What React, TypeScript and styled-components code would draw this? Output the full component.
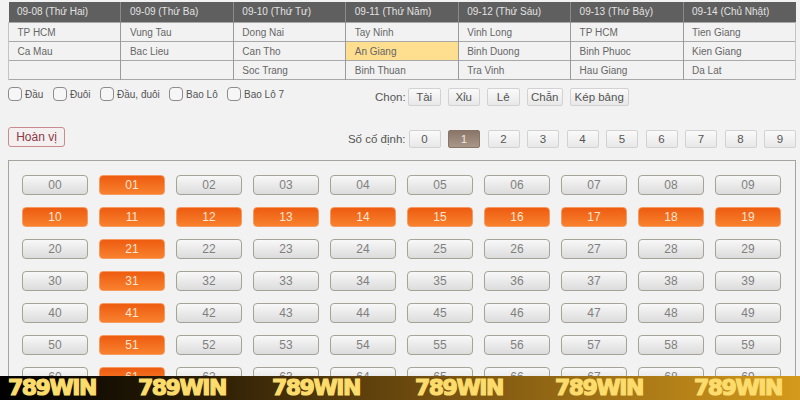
import React from "react";
import styled, { createGlobalStyle } from "styled-components";

const GlobalStyle = createGlobalStyle`
  html, body {
    margin: 0;
    padding: 0;
    background: #f2f2f2;
    font-family: "Liberation Sans", Arial, sans-serif;
  }
`;

const Page = styled.div`
  position: relative;
  width: 800px;
  height: 400px;
  overflow: hidden;
  box-sizing: border-box;
  padding: 2px 4px 0 8px;
  background: #f2f2f2;
`;

const Schedule = styled.table`
  width: 788px;
  border-collapse: collapse;
  table-layout: fixed;
  font-size: 10px;
  color: #666;
  border-bottom: 1px solid #a8a8a8;
`;

const HeadCell = styled.th`
  height: 19px;
  padding: 0 0 1px 8.5px;
  background: #5f5f5f;
  color: #e2e2e2;
  font-weight: normal;
  text-align: left;
  border-left: 1px solid #8a8a8a;
  &:first-child {
    border-left: none;
  }
`;

const Cell = styled.td<{ $today?: boolean }>`
  height: 18px;
  padding: 0 0 0 8.5px;
  background: ${(p) => (p.$today ? "#fddf8f" : "#f2f2f2")};
  border-top: 1px solid #a8a8a8;
  border-left: 1px solid #9a9a9a;
  &:first-child {
    border-left: 1px solid #c4c4c4;
  }
  &:last-child {
    border-right: 1px solid #c4c4c4;
  }
`;

const OptionBar = styled.div`
  display: flex;
  align-items: center;
  height: 18px;
  margin-top: 5px;
`;

const Check = styled.label<{ $gap: number }>`
  display: flex;
  align-items: center;
  gap: 3px;
  width: ${(p) => p.$gap}px;
  font-size: 10px;
  color: #555;
`;

const Box = styled.span`
  width: 12px;
  height: 12px;
  background: #f6f6f6;
  border: 1px solid #8c8c8c;
  border-radius: 4px;
`;

const Chooser = styled.div`
  display: flex;
  align-items: center;
  padding-top: 5px;
  margin-left: 22px;
`;

const ChooseLabel = styled.span`
  margin-right: 2px;
  font-size: 11.5px;
  color: #555;
`;

const ChipRow = styled.div<{ $gap: number }>`
  display: flex;
  gap: ${(p) => p.$gap}px;
`;

const Chip = styled.button<{ $width: number; $active?: boolean }>`
  width: ${(p) => p.$width}px;
  height: 18px;
  padding: 0;
  box-sizing: border-box;
  font-family: inherit;
  font-size: 11.5px;
  color: ${(p) => (p.$active ? "#f0e6dc" : "#555")};
  background: ${(p) =>
    p.$active ? "linear-gradient(#8a7668, #a89688)" : "linear-gradient(#fafafa, #e8e8e8)"};
  border: 1px solid ${(p) => (p.$active ? "#8a7668" : "#d2d2d2")};
  border-radius: 2px;
`;

const FixedBar = styled.div`
  display: flex;
  align-items: center;
  justify-content: space-between;
  height: 20px;
  margin-top: 24px;
`;

const SwapButton = styled.button`
  width: 57px;
  height: 20px;
  padding: 0;
  font-family: inherit;
  font-size: 12px;
  color: #8a3a48;
  background: #f4f0f0;
  border: 1px solid #c98a90;
  border-radius: 3px;
`;

const FixedGroup = styled.div`
  display: flex;
  align-items: center;
  margin-top: 3px;
`;

const FixedLabel = styled.span`
  margin-right: 3px;
  font-size: 11.5px;
  color: #555;
`;

const NumberPanel = styled.div`
  display: grid;
  grid-template-columns: repeat(10, 66px);
  grid-auto-rows: 20px;
  column-gap: 11px;
  row-gap: 12px;
  box-sizing: border-box;
  width: 788px;
  height: 240px;
  margin-top: 13px;
  padding: 14px 0 0 13px;
  border: 1px solid #a5a5a0;
  border-bottom: none;
`;

const NumberButton = styled.button<{ $on: boolean }>`
  padding: 0;
  font-family: inherit;
  font-size: 12px;
  color: ${(p) => (p.$on ? "#ffe6d2" : "#808080")};
  background: ${(p) =>
    p.$on ? "linear-gradient(#ee5c10, #f8812e)" : "linear-gradient(#f8f8f8, #dcdcdc)"};
  border: 1px solid ${(p) => (p.$on ? "#f59a60" : "#a3a396")};
  border-radius: 4px;
`;

const Banner = styled.div`
  position: absolute;
  left: 0;
  right: 0;
  bottom: 0;
  display: flex;
  align-items: center;
  height: 24px;
  background: linear-gradient(90deg, #000 0%, #2a1d05 25%, #755010 55%, #d49a1c 100%);
`;

const BannerText = styled.span<{ $gap: number }>`
  width: 89px;
  margin-left: ${(p) => p.$gap}px;
  font-family: "DejaVu Sans", sans-serif;
  font-size: 22px;
  line-height: 24px;
  font-weight: bold;
  letter-spacing: -1.5px;
  white-space: nowrap;
  color: #fbdc6c;
  -webkit-text-stroke: 1.2px #fbdc6c;
`;

const days = [
  { head: "09-08 (Thứ Hai)", places: ["TP HCM", "Ca Mau", ""] },
  { head: "09-09 (Thứ Ba)", places: ["Vung Tau", "Bac Lieu", ""] },
  { head: "09-10 (Thứ Tư)", places: ["Dong Nai", "Can Tho", "Soc Trang"] },
  { head: "09-11 (Thứ Năm)", places: ["Tay Ninh", "An Giang", "Binh Thuan"] },
  { head: "09-12 (Thứ Sáu)", places: ["Vinh Long", "Binh Duong", "Tra Vinh"] },
  { head: "09-13 (Thứ Bảy)", places: ["TP HCM", "Binh Phuoc", "Hau Giang"] },
  { head: "09-14 (Chủ Nhật)", places: ["Tien Giang", "Kien Giang", "Da Lat"] },
];

const checks = [
  { label: "Đầu", width: 45 },
  { label: "Đuôi", width: 47 },
  { label: "Đầu, đuôi", width: 69 },
  { label: "Bao Lô", width: 58 },
  { label: "Bao Lô 7", width: 126 },
];

const picks = [
  { label: "Tài", width: 33 },
  { label: "Xỉu", width: 32 },
  { label: "Lẻ", width: 33 },
  { label: "Chẵn", width: 36 },
  { label: "Kép bảng", width: 59 },
];

const bannerGaps = [8, 41, 45, 54, 51, 50];

const isOn = (n: number) => n === 1 || (n >= 10 && n < 20) || n % 10 === 1;

export default function App() {
  const numbers = Array.from({ length: 70 }, (_, i) => i);
  return (
    <Page>
      <GlobalStyle />
      <Schedule>
        <thead>
          <tr>
            {days.map((d) => (
              <HeadCell key={d.head}>{d.head}</HeadCell>
            ))}
          </tr>
        </thead>
        <tbody>
          {[0, 1, 2].map((row) => (
            <tr key={row}>
              {days.map((d) => (
                <Cell key={d.head} $today={d.places[row] === "An Giang"}>
                  {d.places[row]}
                </Cell>
              ))}
            </tr>
          ))}
        </tbody>
      </Schedule>

      <OptionBar>
        {checks.map((c) => (
          <Check key={c.label} $gap={c.width}>
            <Box />
            {c.label}
          </Check>
        ))}
        <Chooser>
          <ChooseLabel>Chọn:</ChooseLabel>
          <ChipRow $gap={7}>
            {picks.map((p) => (
              <Chip key={p.label} $width={p.width}>
                {p.label}
              </Chip>
            ))}
          </ChipRow>
        </Chooser>
      </OptionBar>

      <FixedBar>
        <SwapButton>Hoàn vị</SwapButton>
        <FixedGroup>
          <FixedLabel>Số cố định:</FixedLabel>
          <ChipRow $gap={7.5}>
            {[0, 1, 2, 3, 4, 5, 6, 7, 8, 9].map((n) => (
              <Chip key={n} $width={32} $active={n === 1}>
                {n}
              </Chip>
            ))}
          </ChipRow>
        </FixedGroup>
      </FixedBar>

      <NumberPanel>
        {numbers.map((n) => (
          <NumberButton key={n} $on={isOn(n)}>
            {String(n).padStart(2, "0")}
          </NumberButton>
        ))}
      </NumberPanel>

      <Banner>
        {bannerGaps.map((gap, i) => (
          <BannerText key={i} $gap={gap}>
            789WIN
          </BannerText>
        ))}
      </Banner>
    </Page>
  );
}
